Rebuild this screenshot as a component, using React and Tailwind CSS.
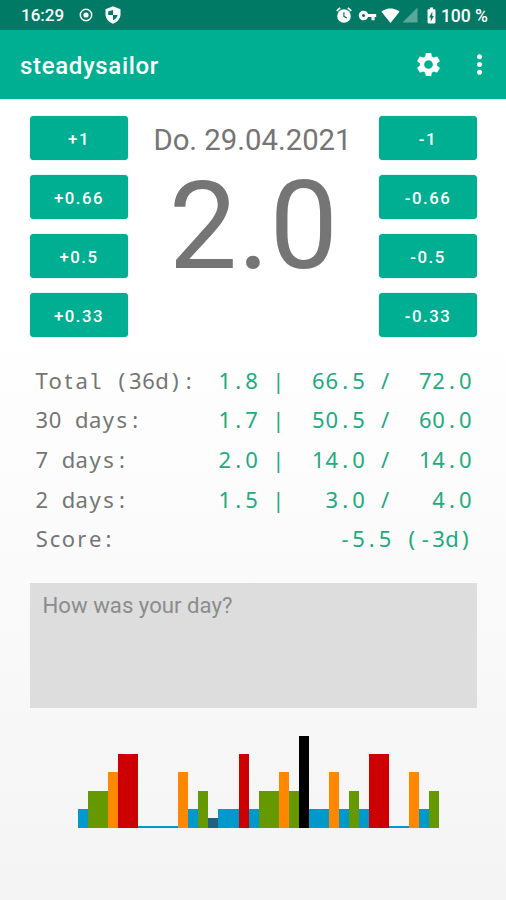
import React from "react";
import {
  MdSettings,
  MdMoreVert,
  MdVpnKey,
  MdSignalWifi4Bar,
  MdSignalCellular4Bar,
  MdBatteryChargingFull,
} from "react-icons/md";

const plusValues = ["+1", "+0.66", "+0.5", "+0.33"];
const minusValues = ["-1", "-0.66", "-0.5", "-0.33"];

const stats = [
  { label: "Total (36d):", value: "1.8 |  66.5 /  72.0" },
  { label: "30 days:", value: "1.7 |  50.5 /  60.0" },
  { label: "7 days:", value: "2.0 |  14.0 /  14.0" },
  { label: "2 days:", value: "1.5 |   3.0 /   4.0" },
  { label: "Score:", value: "-5.5 (-3d)" },
];

// one entry per day, oldest first
const history = [
  1, 2, 2, 3, 4, 4, 0, 0, 0, 0, 3, 1, 2, 0.5, 1, 1, 4, 1,
  2, 2, 3, 2, 5, 1, 1, 3, 1, 2, 1, 4, 4, 0, 0, 3, 1, 2,
];

const barColors = {
  0: "bg-[#0099cc]",
  0.5: "bg-[#20617f]",
  1: "bg-[#0099cc]",
  2: "bg-[#669900]",
  3: "bg-[#ff8800]",
  4: "bg-[#cc0000]",
  5: "bg-black",
};

const TargetIcon = () => (
  <svg viewBox="0 0 14 14" className="w-[14px] h-[14px]">
    <circle cx="7" cy="7" r="5.7" fill="none" stroke="currentColor" strokeWidth="1.5" />
    <circle cx="7" cy="7" r="2.6" fill="currentColor" />
  </svg>
);

const ShieldIcon = () => (
  <svg viewBox="0 0 16 18" className="w-[16px] h-[18px]">
    <path
      fill="currentColor"
      d="M8 0.3 15.5 3.3V8.3C15.5 12.6 12.3 16.5 8 17.7 3.7 16.5.5 12.6.5 8.3V3.3Z"
    />
    <path fill="#007a64" d="M8 4V9H3.2V5.6ZM8 9H12.6C12.2 11.5 10.4 13.3 8 14.2Z" />
  </svg>
);

const AlarmIcon = () => (
  <svg viewBox="0 0 16 16" className="w-[16px] h-[16px]">
    <circle cx="8" cy="9" r="6.8" fill="currentColor" />
    <path
      d="M.7 3.8 4.2.9M15.3 3.8 11.8.9"
      stroke="currentColor"
      strokeWidth="1.6"
      fill="none"
    />
    <path d="M7.9 5.2V9.3L10.8 11" stroke="#007a64" strokeWidth="1.2" fill="none" />
  </svg>
);

// Fixed pitch text, every character sits in its own cell
const Mono = ({ text }) => (
  <span className="flex items-baseline whitespace-pre">
    {text.split("").map((char, i) => (
      <span
        key={i}
        className={
          char === "l"
            ? "w-[13.36px] flex justify-center font-['Liberation_Mono',monospace]"
            : "w-[13.36px] flex justify-center"
        }
      >
        {char}
      </span>
    ))}
  </span>
);

const ButtonColumn = ({ values }) => (
  <div className="w-[98px] flex flex-col gap-[15px]">
    {values.map((value) => (
      <button
        key={value}
        className="h-[44px] pt-[2px] rounded-[4px] bg-[#00af91] text-white text-[16.8px] font-medium tracking-[1.5px] shadow-[0_0_1px_#00af91]"
      >
        {value}
      </button>
    ))}
  </div>
);

const App = () => {
  return (
    <div className="w-[506px] h-[900px] overflow-hidden flex flex-col font-['Roboto',sans-serif] bg-linear-to-b from-white from-35% to-[#f4f4f4]">
      {/* STATUS BAR */}
      <div className="h-[30px] shrink-0 bg-[#007a64] text-white flex items-center pl-[21px] pr-[18px]">
        <span className="w-[43px] text-[17px] font-medium mr-[15px] pt-[2px]">16:29</span>
        <TargetIcon />
        <span className="ml-[12px]">
          <ShieldIcon />
        </span>
        <div className="ml-auto flex items-center">
          <AlarmIcon />
          <MdVpnKey className="w-[19px] h-[19px] ml-[6px]" />
          <MdSignalWifi4Bar className="w-[19px] h-[19px] ml-[4px]" />
          <MdSignalCellular4Bar className="w-[18px] h-[18px] ml-[1px] opacity-35" />
          <MdBatteryChargingFull className="w-[19px] h-[19px] ml-[3px]" />
          <span className="text-[17.5px] font-medium ml-[0px] pt-[2px] whitespace-nowrap">
            100 %
          </span>
        </div>
      </div>

      {/* APP BAR */}
      <div className="h-[68.6px] shrink-0 bg-[#00af91] text-white flex items-center pl-[20px] pr-[11px] shadow-[0_1px_1px_#d5f1ee]">
        <h1 className="text-[24px] font-medium tracking-[0.65px] pt-[4px]">steadysailor</h1>
        <MdSettings className="w-[29px] h-[29px] ml-auto mr-[-1px]" />
        <MdMoreVert className="w-[31px] h-[31px] ml-[22px]" />
      </div>

      {/* RATING */}
      <div className="h-[222px] mt-[17.8px] px-[30px] pr-[29px] flex justify-between shrink-0">
        <ButtonColumn values={plusValues} />
        <div className="flex flex-col items-center text-[#757575]">
          <div className="text-[29.3px] leading-[34px] mt-[7px] -ml-[2px]">Do. 29.04.2021</div>
          <div className="text-[122px] leading-[106px] mt-[17px]">2.0</div>
        </div>
        <ButtonColumn values={minusValues} />
      </div>

      {/* STATS */}
      <div className="mt-[22.3px] pl-[35px] pr-[34px] shrink-0 font-['Noto_Sans',sans-serif] text-[22px] leading-[39.7px]">
        {stats.map((row) => (
          <div key={row.label} className="flex justify-between h-[39.7px]">
            <div className="text-[#757575]">
              <Mono text={row.label} />
            </div>
            <div className="text-[#1faa80]">
              <Mono text={row.value} />
            </div>
          </div>
        ))}
      </div>

      {/* NOTE */}
      <div className="mt-[24px] ml-[30px] w-[447px] h-[125px] shrink-0 bg-[#dddddd] px-[12.5px] pt-[9px] text-[22.2px] leading-[27px] text-[#8c8c8c]">
        How was your day?
      </div>

      {/* HISTORY */}
      <div className="mt-[27px] ml-[78px] w-[361px] h-[93px] shrink-0 flex items-end">
        {history.map((value, i) => (
          <div
            key={i}
            className={`flex-1 ${barColors[value]}`}
            style={{ height: Math.max(2, value * 18.1 + 1.4) }}
          />
        ))}
      </div>
    </div>
  );
};

export default App;
